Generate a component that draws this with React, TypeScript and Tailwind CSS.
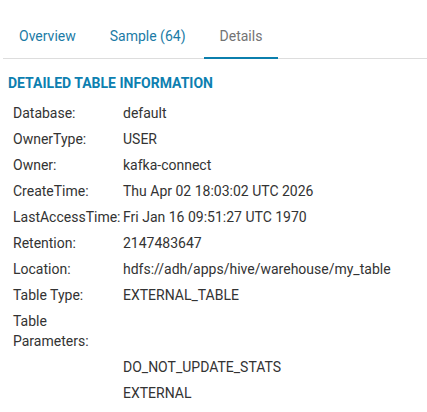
import React from 'react';

const rows: [string, string][] = [
  ['Database:', 'default'],
  ['OwnerType:', 'USER'],
  ['Owner:', 'kafka-connect'],
  ['CreateTime:', 'Thu Apr 02 18:03:02 UTC 2026'],
  ['LastAccessTime:', 'Fri Jan 16 09:51:27 UTC 1970'],
  ['Retention:', '2147483647'],
  ['Location:', 'hdfs://adh/apps/hive/warehouse/my_table'],
  ['Table Type:', 'EXTERNAL_TABLE'],
];

const params = ['DO_NOT_UPDATE_STATS', 'EXTERNAL'];

const tabs = ['Overview', 'Sample (64)', 'Details'];

export default function App() {
  return (
    <div className="bg-white min-h-[412px] w-[427px] text-[#333] font-['Roboto',sans-serif]">
      <div className="pt-[16px] pl-[3px]">
        <ul className="flex border-b border-[#dddddd]">
          {tabs.map((t, i) => {
            const active = i === tabs.length - 1;
            return (
              <li
                key={t}
                className={`px-4 pt-[10px] pb-[11px] text-[14px] leading-[20px] mr-[2px] -mb-px ${
                  active ? 'text-[#737373] border-b-[2px] border-[#0b7fad]' : 'text-[#1b7ba6] border-b-[2px] border-transparent'
                }`}
              >
                {t}
              </li>
            );
          })}
        </ul>
      </div>
      <div className="pl-[8px] pt-[16px]">
        <h3 className="text-[14px] leading-[16px] font-bold uppercase text-[#0d7fb0]">Detailed Table Information</h3>
        <table className="mt-[9px] ml-[5px] text-[14px] leading-[20px] border-collapse">
          <tbody>
            {rows.map(([k, v]) => (
              <tr key={k}>
                <td className="w-[110px] py-[3px] align-top">{k}</td>
                <td className="py-[3px] align-top">{v}</td>
              </tr>
            ))}
            <tr>
              <td className="w-[110px] py-[3px] align-top">
                Table
                <br />
                Parameters:
              </td>
              <td className="py-[3px]"></td>
            </tr>
            {params.map((p) => (
              <tr key={p}>
                <td className="py-[3px]"></td>
                <td className="py-[3px] align-top">{p}</td>
              </tr>
            ))}
          </tbody>
        </table>
      </div>
    </div>
  );
}
